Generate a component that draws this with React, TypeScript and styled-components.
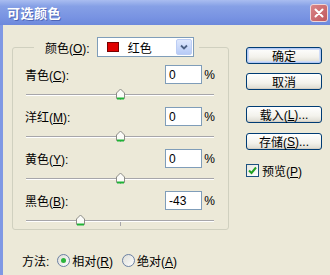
import React from 'react'
import styled, { createGlobalStyle } from 'styled-components'

const GlobalStyle = createGlobalStyle`
  html, body {
    margin: 0;
    padding: 0;
    background: #ece9d8;
  }
  body {
    font-family: 'Liberation Sans', 'Noto Sans CJK SC', sans-serif;
    font-size: 12px;
    color: #000;
  }
`

const Window = styled.div`
  width: 330px;
  height: 275px;
  display: flex;
  flex-direction: column;
  background: #ece9d8;
  overflow: hidden;
`

const TitleBar = styled.div`
  height: 25px;
  flex: none;
  display: flex;
  align-items: center;
  justify-content: space-between;
  padding: 0 2px 0 7px;
  background: linear-gradient(#a9bdf0, #86a0e6 25%, #7893e2 70%, #6d89dc);
`

const Title = styled.span`
  color: #fff;
  font-size: 13px;
  font-weight: bold;
  font-family: 'Noto Sans CJK SC', sans-serif;
  letter-spacing: 0.5px;
  text-shadow: 1px 1px 0 rgba(40, 60, 140, 0.5);
`

const CloseButton = styled.div`
  width: 18px;
  height: 18px;
  box-sizing: border-box;
  border: 1px solid #eed6d8;
  border-radius: 3px;
  background: linear-gradient(135deg, #d98487, #c0585e);
  display: flex;
  align-items: center;
  justify-content: center;
`

const Body = styled.div`
  flex: 1;
  display: flex;
  border-left: 3px solid #7f98e4;
  padding: 12px 0 0 9px;
`

const LeftColumn = styled.div`
  width: 217px;
  display: flex;
  flex-direction: column;
`

const Group = styled.fieldset`
  margin: 0;
  min-width: 0;
  width: 217px;
  box-sizing: border-box;
  border: 1px solid #d0d0bf;
  border-radius: 3px;
  padding: 8px 13px 2px 12px;
`

const GroupLegend = styled.legend`
  margin-left: 9px;
  padding: 0 5px 0 11px;
  height: 20px;
  display: flex;
  align-items: center;
  gap: 7px;
`

const Combo = styled.div`
  width: 97px;
  height: 20px;
  box-sizing: border-box;
  border: 1px solid #7f9db9;
  background: #fff;
  display: flex;
  align-items: center;
  padding: 0 1px 0 9px;
`

const Swatch = styled.span<{ $color: string }>`
  width: 12px;
  height: 10px;
  box-sizing: border-box;
  border: 1px solid #7a0000;
  background: ${(p) => p.$color};
  margin-right: 9px;
`

const ComboText = styled.span`
  flex: 1;
`

const ComboButton = styled.span`
  width: 16px;
  height: 16px;
  box-sizing: border-box;
  border: 1px solid #bccdf4;
  border-radius: 2px;
  background: linear-gradient(#dfe8fd, #b7cbf7);
  display: flex;
  align-items: center;
  justify-content: center;
`

const Rows = styled.div`
  display: flex;
  flex-direction: column;
  gap: 6px;
`

const Row = styled.div`
  display: flex;
  flex-direction: column;
`

const InputLine = styled.div`
  display: flex;
  align-items: center;
  height: 19px;
`

const Label = styled.span`
  flex: 1;
`

const Field = styled.input`
  width: 37px;
  height: 19px;
  box-sizing: border-box;
  border: 1px solid #7f9db9;
  padding: 0 0 0 3px;
  margin: 0;
  font: inherit;
  color: #000;
  background: #fff;
  outline: none;
`

const Percent = styled.span`
  width: 13px;
  text-align: right;
`

const SliderWrap = styled.div`
  position: relative;
  height: 14px;
  margin: 3px 1px 0;
`

const Track = styled.div`
  position: absolute;
  left: 0;
  right: 0;
  top: 7px;
  height: 0;
  border-top: 1px solid #a7a6aa;
  border-bottom: 1px solid #fff;
`

const Tick = styled.div`
  position: absolute;
  left: 50%;
  top: 9px;
  width: 1px;
  height: 4px;
  background: #a7a6aa;
`

const Thumb = styled.svg`
  position: absolute;
  top: 1px;
  margin-left: -5px;
`

const MethodRow = styled.div`
  margin-top: 22px;
  padding-left: 10px;
  height: 16px;
  display: flex;
  align-items: center;
`

const MethodLabel = styled.span`
  margin-right: 8px;
`

const RadioOption = styled.label<{ $gap?: number }>`
  display: flex;
  align-items: center;
  gap: 2px;
  margin-left: ${(p) => p.$gap || 0}px;
`

const RightColumn = styled.div`
  margin-left: 17px;
  margin-top: 10px;
  display: flex;
  flex-direction: column;
`

const Button = styled.div<{ $gap?: number; $default?: boolean }>`
  width: 76px;
  height: 17px;
  box-sizing: border-box;
  margin-top: ${(p) => p.$gap || 0}px;
  border: 1px solid #003c74;
  border-radius: 3px;
  background: linear-gradient(#ffffff, #f3f2ec 60%, #dcdad0);
  box-shadow: ${(p) =>
    p.$default ? 'inset 0 0 0 1px #b4c9f4, inset 0 0 0 2px #cfdcf8' : 'inset 0 -1px 0 #d6d0c5'};
  display: flex;
  align-items: center;
  justify-content: center;
`

const CheckRow = styled.label`
  margin-top: 12px;
  display: flex;
  align-items: center;
  gap: 3px;
`

const CheckBox = styled.span`
  width: 13px;
  height: 13px;
  box-sizing: border-box;
  border: 1px solid #1c5180;
  background: linear-gradient(135deg, #e6e6df, #fff);
  display: flex;
  align-items: center;
  justify-content: center;
`

const channels = [
  { name: '青色', key: 'C', value: 0 },
  { name: '洋红', key: 'M', value: 0 },
  { name: '黄色', key: 'Y', value: 0 },
  { name: '黑色', key: 'B', value: -43 }
]

const SliderThumb = ({ value }: { value: number }) => (
  <Thumb width="11" height="12" viewBox="0 0 11 12" style={{ left: `${((value + 100) / 200) * 100}%` }}>
    <path d="M1.5 5 L5.5 1 L9.5 5 L9.5 10.5 L1.5 10.5 Z" fill="#fbfbf8" stroke="#8c8c86" />
    <path d="M2 10.5 L9 10.5" stroke="#1fb335" strokeWidth="2" />
  </Thumb>
)

const Radio = ({ checked }: { checked?: boolean }) => (
  <svg width="13" height="13" viewBox="0 0 13 13">
    <defs>
      <linearGradient id="radioFill" x1="0" y1="0" x2="1" y2="1">
        <stop offset="0" stopColor="#dcdcd5" />
        <stop offset="1" stopColor="#ffffff" />
      </linearGradient>
    </defs>
    <circle cx="6.5" cy="6.5" r="6" fill="url(#radioFill)" stroke="#6a7fa2" />
    {checked && <circle cx="6.5" cy="6.5" r="2.5" fill="#2cb43c" />}
  </svg>
)

const App = () => {
  return (
    <Window>
      <GlobalStyle />
      <TitleBar>
        <Title>可选颜色</Title>
        <CloseButton>
          <svg width="10" height="10" viewBox="0 0 10 10">
            <path d="M1.5 1.5 L8.5 8.5 M8.5 1.5 L1.5 8.5" stroke="#fff" strokeWidth="2" strokeLinecap="round" />
          </svg>
        </CloseButton>
      </TitleBar>
      <Body>
        <LeftColumn>
          <Group>
            <GroupLegend>
              <span>
                颜色(<u>O</u>):
              </span>
              <Combo>
                <Swatch $color="#e00000" />
                <ComboText>红色</ComboText>
                <ComboButton>
                  <svg width="8" height="6" viewBox="0 0 8 6">
                    <path d="M1 1.5 L4 4.5 L7 1.5" fill="none" stroke="#4d6185" strokeWidth="1.8" />
                  </svg>
                </ComboButton>
              </Combo>
            </GroupLegend>
            <Rows>
              {channels.map((c) => (
                <Row key={c.key}>
                  <InputLine>
                    <Label>
                      {c.name}(<u>{c.key}</u>):
                    </Label>
                    <Field defaultValue={String(c.value)} readOnly />
                    <Percent>%</Percent>
                  </InputLine>
                  <SliderWrap>
                    <Track />
                    <Tick />
                    <SliderThumb value={c.value} />
                  </SliderWrap>
                </Row>
              ))}
            </Rows>
          </Group>
          <MethodRow>
            <MethodLabel>方法:</MethodLabel>
            <RadioOption>
              <Radio checked />
              <span>
                相对(<u>R</u>)
              </span>
            </RadioOption>
            <RadioOption $gap={9}>
              <Radio />
              <span>
                绝对(<u>A</u>)
              </span>
            </RadioOption>
          </MethodRow>
        </LeftColumn>
        <RightColumn>
          <Button $default>确定</Button>
          <Button $gap={9}>取消</Button>
          <Button $gap={16}>
            载入(<u>L</u>)...
          </Button>
          <Button $gap={10}>
            存储(<u>S</u>)...
          </Button>
          <CheckRow>
            <CheckBox>
              <svg width="9" height="9" viewBox="0 0 9 9">
                <path d="M1 4.5 L3.5 7 L8 1.5" fill="none" stroke="#21a121" strokeWidth="2" />
              </svg>
            </CheckBox>
            <span>
              预览(<u>P</u>)
            </span>
          </CheckRow>
        </RightColumn>
      </Body>
    </Window>
  )
}

export default App
